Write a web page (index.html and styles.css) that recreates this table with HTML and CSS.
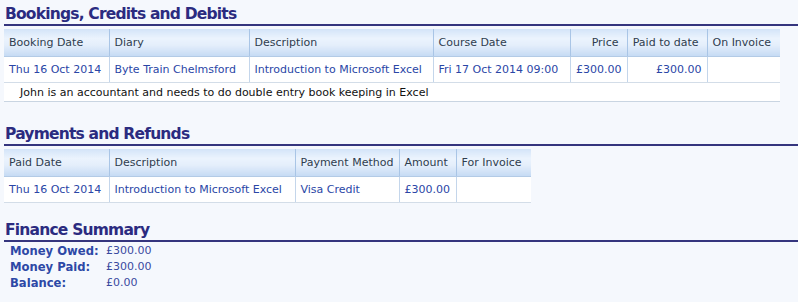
FILE: index.html
```html
<!DOCTYPE html>
<html>
<head>
<meta charset="utf-8">
<link rel="stylesheet" href="styles.css">
</head>
<body>
<section class="block">
  <h2 class="title">Bookings, Credits and Debits</h2>
  <table class="grid grid-bookings">
    <colgroup>
      <col class="c105"><col class="c140"><col class="c184"><col class="c137"><col class="c57"><col class="c80"><col class="c73">
    </colgroup>
    <thead>
      <tr>
        <th>Booking Date</th><th>Diary</th><th>Description</th><th>Course Date</th><th class="num">Price</th><th class="num">Paid to date</th><th>On Invoice</th>
      </tr>
    </thead>
    <tbody>
      <tr class="data">
        <td>Thu 16 Oct 2014</td><td>Byte Train Chelmsford</td><td>Introduction to Microsoft Excel</td><td>Fri 17 Oct 2014 09:00</td><td class="num">£300.00</td><td class="num">£300.00</td><td></td>
      </tr>
      <tr class="note">
        <td colspan="7">John is an accountant and needs to do double entry book keeping in Excel</td>
      </tr>
    </tbody>
  </table>
</section>

<section class="block block-spaced">
  <h2 class="title">Payments and Refunds</h2>
  <table class="grid grid-payments">
    <colgroup>
      <col class="c105"><col class="c186"><col class="c104"><col class="c57"><col class="c75">
    </colgroup>
    <thead>
      <tr>
        <th>Paid Date</th><th>Description</th><th>Payment Method</th><th>Amount</th><th>For Invoice</th>
      </tr>
    </thead>
    <tbody>
      <tr class="data">
        <td>Thu 16 Oct 2014</td><td>Introduction to Microsoft Excel</td><td>Visa Credit</td><td>£300.00</td><td></td>
      </tr>
    </tbody>
  </table>
</section>

<section class="block">
  <h2 class="title">Finance Summary</h2>
  <dl class="summary">
    <dt>Money Owed:</dt><dd>£300.00</dd>
    <dt>Money Paid:</dt><dd>£300.00</dd>
    <dt>Balance:</dt><dd>£0.00</dd>
  </dl>
</section>
</body>
</html>
```

FILE: styles.css
```css
html, body {
  margin: 0;
  background: #f5f8fd;
}
body {
  padding: 0 0 0 4px;
  font-family: "DejaVu Sans", Verdana, sans-serif;
  font-size: 11px;
}
.block {
  margin-bottom: 19px;
}
.block-spaced {
  padding-top: 3px;
  margin-bottom: 17px;
}
.block-spaced .title {
  margin-top: 0;
}
.title {
  margin: 4px 0 0 0;
  padding-left: 1px;
  font-size: 15.5px;
  letter-spacing: -0.8px;
  line-height: 20px;
  font-weight: bold;
  color: #2b2b80;
  border-bottom: 2px solid #35357e;
}
.grid {
  margin-top: 3px;
  border-collapse: collapse;
  table-layout: fixed;
  background: #ffffff;
}
.grid-bookings { width: 776px; }
.grid-payments { width: 527px; }
.c105 { width: 105px; }
.c140 { width: 140px; }
.c184 { width: 184px; }
.c137 { width: 137px; }
.c57 { width: 57px; }
.c80 { width: 80px; }
.c73 { width: 73px; }
.c186 { width: 186px; }
.c104 { width: 104px; }
.c75 { width: 75px; }

.grid th {
  height: 27px;
  padding: 0 5px;
  text-align: left;
  font-weight: normal;
  color: #2f3d4f;
  white-space: nowrap;
  background: linear-gradient(#d3e4f8 0%, #ebf3fd 35%, #e4eefb 60%, #c6dbf4 100%);
  border-left: 1px solid #a9c5e6;
  border-bottom: 1px solid #b3cbe6;
}
.grid th:first-child { border-left: none; }
.grid th.num { text-align: right; padding-right: 8px; }
.grid td {
  padding: 0 5px;
  white-space: nowrap;
}
.data td {
  height: 25px;
  color: #2a46a6;
  border-left: 1px solid #c4d6eb;
  border-bottom: 1px solid #d3dde8;
}
.data td:first-child { border-left: none; }
.data td.num { text-align: right; }
.note td {
  height: 18px;
  padding-left: 16px;
  color: #111111;
  border-bottom: 1px solid #c9d5e2;
}

.summary {
  margin: 1px 0 0 6px;
  display: grid;
  grid-template-columns: 96px auto;
  line-height: 16px;
}
.summary dt {
  font-weight: bold;
  font-size: 11.6px;
  color: #2d48a6;
}
.summary dd {
  margin: 0;
  color: #3a4aa0;
}
```
